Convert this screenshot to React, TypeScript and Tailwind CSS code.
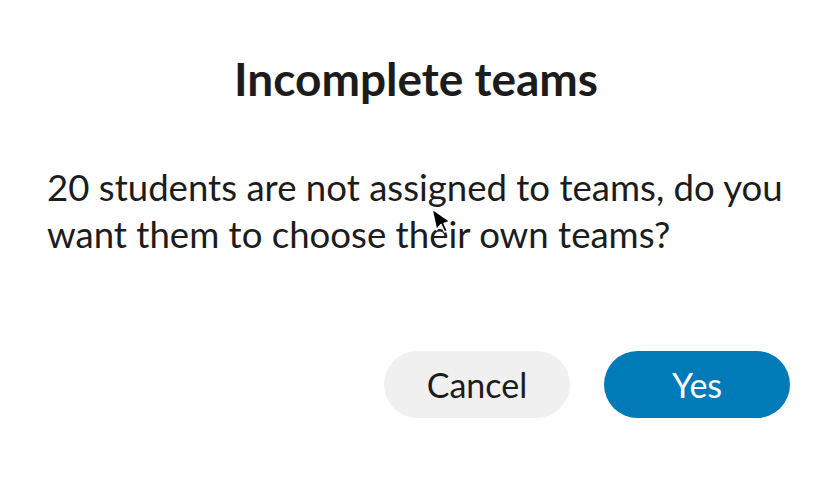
export default function App() {
  return (
    <div className="relative h-[484px] w-[832px] overflow-hidden bg-white font-['Lato',sans-serif] text-[#1c1c1c]">
      <h1 className="pt-[51px] text-center text-[46px] font-bold leading-[56px]">
        Incomplete teams
      </h1>

      <p className="mt-[57px] px-[47px] text-[36.6px] leading-[47px]">
        20 students are not assigned to teams, do you want them to choose their own teams?
      </p>

      <div className="mt-[93px] flex justify-end gap-[34px] pr-[42px]">
        <button className="h-[67px] w-[186px] rounded-full bg-[#f0f0f0] text-[34px] text-[#1c1c1c]">
          Cancel
        </button>
        <button className="h-[67px] w-[186px] rounded-full bg-[#007bb8] text-[34px] text-white">
          Yes
        </button>
      </div>

      {/* mouse pointer */}
      <svg
        className="absolute left-[430px] top-[207px]"
        width="26"
        height="30"
        viewBox="0 0 26 30"
      >
        <path
          d="M2 2 L6.5 23 L11 17.5 L14.5 25 L17.5 23.8 L14 16.5 L20 14.5 Z"
          fill="#000"
          stroke="#fff"
          strokeWidth="1.5"
          strokeLinejoin="round"
        />
      </svg>
    </div>
  );
}
